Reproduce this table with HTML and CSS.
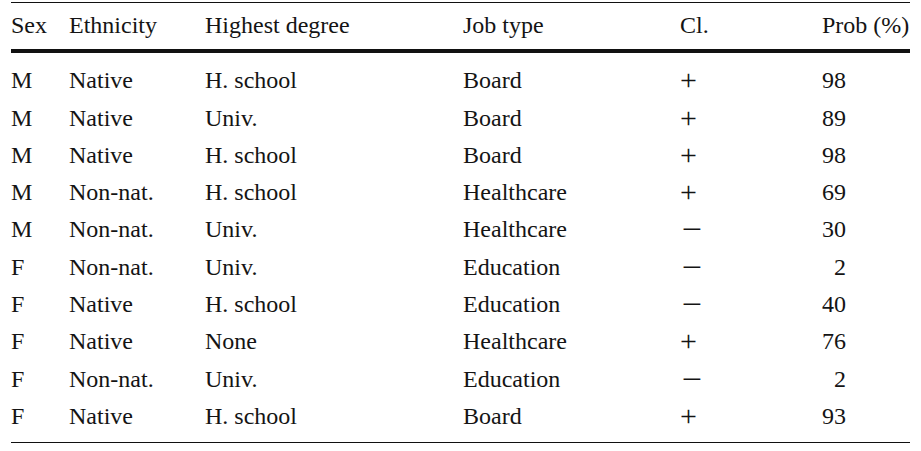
FILE: index.html
```html
<!DOCTYPE html>
<html>
<head>
<meta charset="utf-8">
<link rel="stylesheet" href="styles.css">
</head>
<body>
<div class="tbl">
  <div class="head row">
    <span>Sex</span><span>Ethnicity</span><span>Highest degree</span><span>Job type</span><span>Cl.</span><span>Prob (%)</span>
  </div>
  <div class="body">
    <div class="row"><span>M</span><span>Native</span><span>H. school</span><span>Board</span><span class="sign">+</span><span class="num">98</span></div>
    <div class="row"><span>M</span><span>Native</span><span>Univ.</span><span>Board</span><span class="sign">+</span><span class="num">89</span></div>
    <div class="row"><span>M</span><span>Native</span><span>H. school</span><span>Board</span><span class="sign">+</span><span class="num">98</span></div>
    <div class="row"><span>M</span><span>Non-nat.</span><span>H. school</span><span>Healthcare</span><span class="sign">+</span><span class="num">69</span></div>
    <div class="row"><span>M</span><span>Non-nat.</span><span>Univ.</span><span>Healthcare</span><span class="sign"><span class="minus">−</span></span><span class="num">30</span></div>
    <div class="row"><span>F</span><span>Non-nat.</span><span>Univ.</span><span>Education</span><span class="sign"><span class="minus">−</span></span><span class="num">2</span></div>
    <div class="row"><span>F</span><span>Native</span><span>H. school</span><span>Education</span><span class="sign"><span class="minus">−</span></span><span class="num">40</span></div>
    <div class="row"><span>F</span><span>Native</span><span>None</span><span>Healthcare</span><span class="sign">+</span><span class="num">76</span></div>
    <div class="row"><span>F</span><span>Non-nat.</span><span>Univ.</span><span>Education</span><span class="sign"><span class="minus">−</span></span><span class="num">2</span></div>
    <div class="row"><span>F</span><span>Native</span><span>H. school</span><span>Board</span><span class="sign">+</span><span class="num">93</span></div>
  </div>
</div>
</body>
</html>
```
FILE: styles.css
```css
html, body {
  margin: 0;
  padding: 0;
  background: #fff;
}
body {
  font-family: "Liberation Serif", "Times New Roman", serif;
  font-size: 24px;
  color: #141414;
}
.tbl {
  margin: 2px 0 0 11px;
  width: 899px;
  border-top: 1px solid #111;
  border-bottom: 1px solid #111;
}
.row {
  display: grid;
  grid-template-columns: 58px 136px 258px 217px 142px 1fr;
  height: 37.3px;
  line-height: 37.3px;
  white-space: nowrap;
}
.head {
  box-sizing: content-box;
  padding: 4.25px 0 4.5px;
  border-bottom: 4px solid #111;
}
.body {
  padding: 9.25px 0 6.75px;
}
.num {
  width: 24px;
  text-align: right;
}
.sign {
  font-size: 30px;
  line-height: 37.3px;
  position: relative;
  top: -1px;
}
.minus {
  display: inline-block;
  margin-left: 2px;
  transform: scaleX(1.2);
  transform-origin: left center;
}
```
